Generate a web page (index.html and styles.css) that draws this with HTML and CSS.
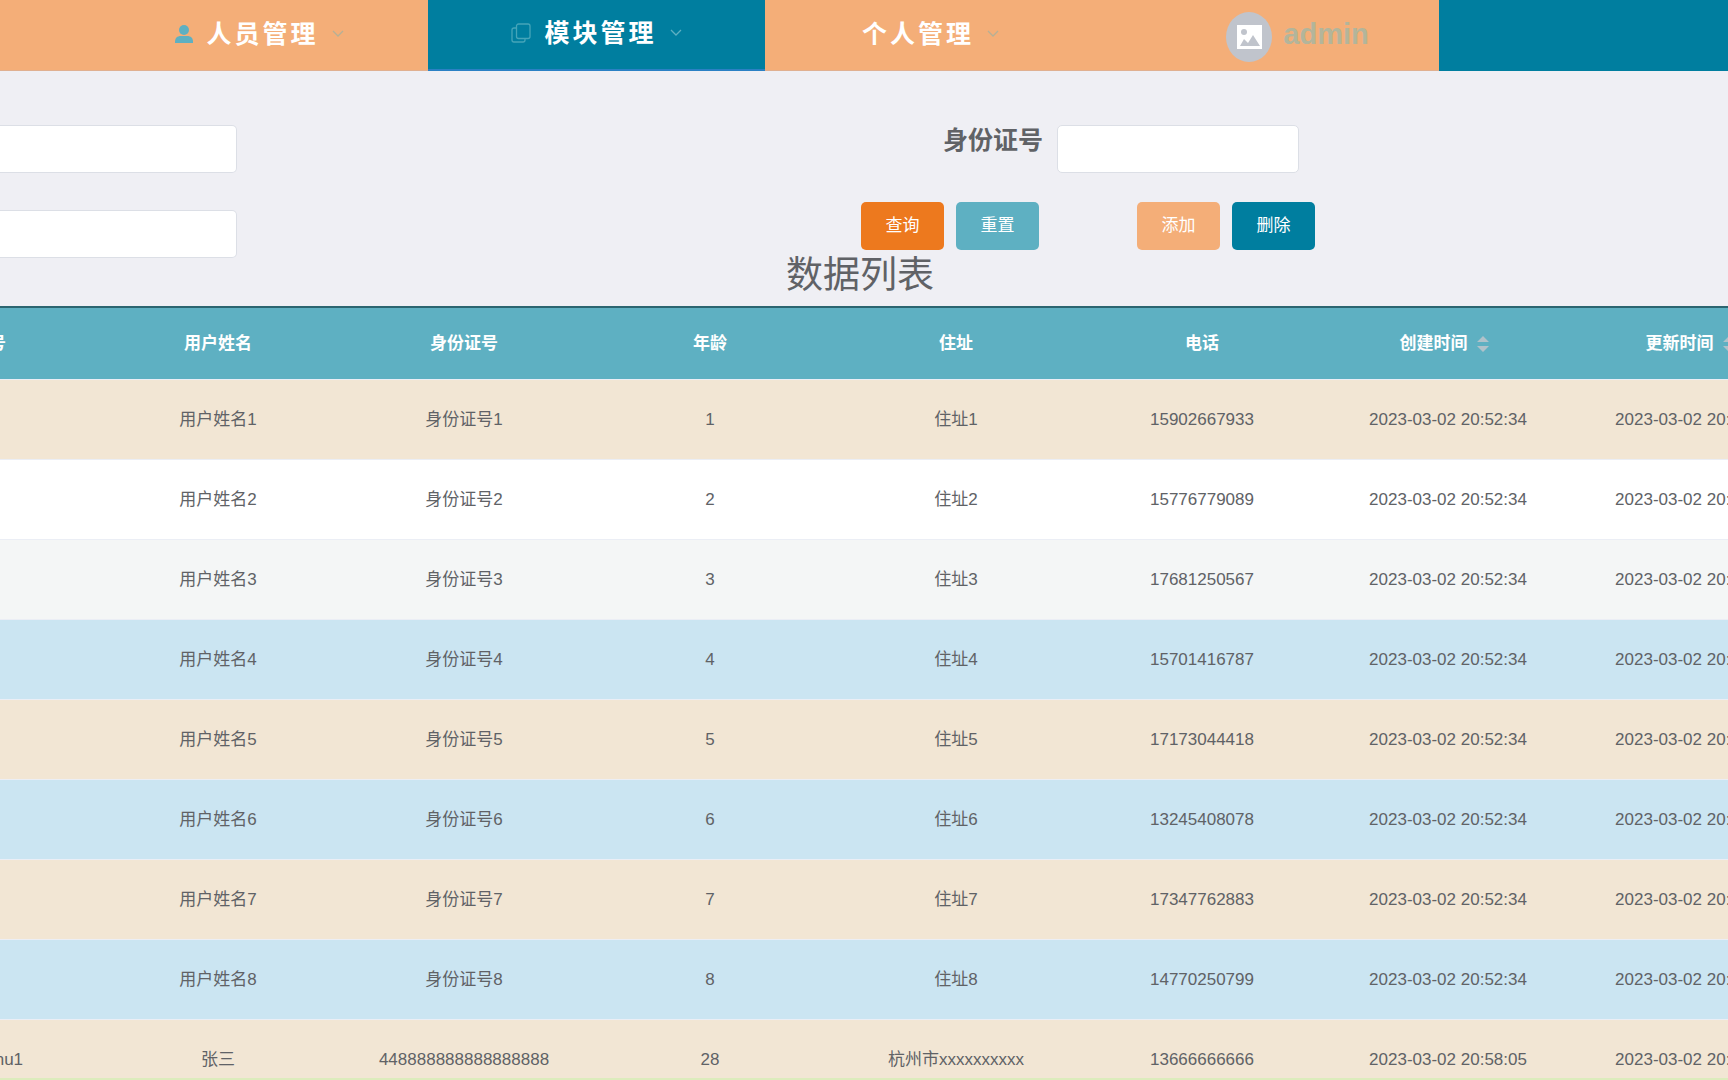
FILE: index.html
```html
<!DOCTYPE html>
<html lang="zh-CN">
<head>
<meta charset="utf-8">
<title>数据列表</title>
<link rel="stylesheet" href="styles.css">
</head>
<body>
<header class="topbar">
  <nav class="menu">
    <a class="item people" href="#">
      <svg class="icon" width="18" height="20" viewBox="0 0 18 20"><circle cx="9" cy="6" r="5" fill="currentColor"/><path d="M0 19v-1c0-4 2-6 6-6h6c4 0 6 2 6 6v1z" fill="currentColor"/></svg>
      <span>人员管理</span>
      <svg class="arrow" width="12" height="8" viewBox="0 0 12 8"><path d="M1 1l5 5 5-5"/></svg>
    </a>
    <a class="item active" href="#">
      <svg class="icon" width="20" height="20" viewBox="0 0 20 20" fill="none" stroke="currentColor" stroke-width="1.300"><rect x="5.500" y="1" width="13.500" height="14.500" rx="2"/><path d="M5.500 5H3a2 2 0 0 0-2 2v10a2 2 0 0 0 2 2h9a2 2 0 0 0 2-2v-1.500"/></svg>
      <span>模块管理</span>
      <svg class="arrow" width="12" height="8" viewBox="0 0 12 8"><path d="M1 1l5 5 5-5"/></svg>
    </a>
    <a class="item personal" href="#">
      <span>个人管理</span>
      <svg class="arrow" width="12" height="8" viewBox="0 0 12 8"><path d="M1 1l5 5 5-5"/></svg>
    </a>
    <a class="item user" href="#">
      <svg class="avatar" width="46" height="50" viewBox="0 0 46 50"><ellipse cx="23" cy="25" rx="23" ry="25" fill="#c0c4cc"/><path d="M11 13h25v24H11z" fill="#fff"/><circle cx="18" cy="20" r="3" fill="#c0c4cc"/><path d="M14 34l4-7 4 4 5-8 7 11z" fill="#c0c4cc"/></svg>
      <span>admin</span>
    </a>
  </nav>
</header>
<main>
  <form class="filters">
    <div class="left">
      <input type="text" aria-label="用户账号">
      <input type="text" aria-label="用户姓名">
    </div>
    <div class="right">
      <div class="field">
        <label for="idno">身份证号</label>
        <input id="idno" type="text">
      </div>
      <div class="actions">
        <button type="button" class="search">查询</button>
        <button type="button" class="reset">重置</button>
        <button type="button" class="add">添加</button>
        <button type="button" class="remove">删除</button>
      </div>
    </div>
  </form>
  <h1 class="title">数据列表</h1>
  <div class="list">
    <table>
      <thead>
        <tr><th>用户账号</th><th>用户姓名</th><th>身份证号</th><th>年龄</th><th>住址</th><th>电话</th>
        <th class="sortable">创建时间<svg class="sort" width="12" height="16" viewBox="0 0 12 16"><path d="M6 0l6 6H0zM6 16l6-6H0z"/></svg></th>
        <th class="sortable">更新时间<svg class="sort" width="12" height="16" viewBox="0 0 12 16"><path d="M6 0l6 6H0zM6 16l6-6H0z"/></svg></th></tr>
      </thead>
      <tbody>
        <tr class="sand"><td>账号1</td><td>用户姓名1</td><td>身份证号1</td><td>1</td><td>住址1</td><td>15902667933</td><td>2023-03-02 20:52:34</td><td>2023-03-02 20:52:34</td></tr>
        <tr class="plain"><td>账号2</td><td>用户姓名2</td><td>身份证号2</td><td>2</td><td>住址2</td><td>15776779089</td><td>2023-03-02 20:52:34</td><td>2023-03-02 20:52:34</td></tr>
        <tr class="hover"><td>账号3</td><td>用户姓名3</td><td>身份证号3</td><td>3</td><td>住址3</td><td>17681250567</td><td>2023-03-02 20:52:34</td><td>2023-03-02 20:52:34</td></tr>
        <tr class="sky"><td>账号4</td><td>用户姓名4</td><td>身份证号4</td><td>4</td><td>住址4</td><td>15701416787</td><td>2023-03-02 20:52:34</td><td>2023-03-02 20:52:34</td></tr>
        <tr class="sand"><td>账号5</td><td>用户姓名5</td><td>身份证号5</td><td>5</td><td>住址5</td><td>17173044418</td><td>2023-03-02 20:52:34</td><td>2023-03-02 20:52:34</td></tr>
        <tr class="sky"><td>账号6</td><td>用户姓名6</td><td>身份证号6</td><td>6</td><td>住址6</td><td>13245408078</td><td>2023-03-02 20:52:34</td><td>2023-03-02 20:52:34</td></tr>
        <tr class="sand"><td>账号7</td><td>用户姓名7</td><td>身份证号7</td><td>7</td><td>住址7</td><td>17347762883</td><td>2023-03-02 20:52:34</td><td>2023-03-02 20:52:34</td></tr>
        <tr class="sky"><td>账号8</td><td>用户姓名8</td><td>身份证号8</td><td>8</td><td>住址8</td><td>14770250799</td><td>2023-03-02 20:52:34</td><td>2023-03-02 20:52:34</td></tr>
        <tr class="sand"><td>yonghuzhhu1</td><td>张三</td><td>448888888888888888</td><td>28</td><td>杭州市xxxxxxxxxx</td><td>13666666666</td><td>2023-03-02 20:58:05</td><td>2023-03-02 20:58:05</td></tr>
      </tbody>
    </table>
  </div>
</main>
<div class="edge"></div>
</body>
</html>
```
FILE: styles.css
```css
* { box-sizing: border-box; }
body {
  margin: 0;
  height: 100vh;
  overflow: hidden;
  background: #efeff4;
  color: #606266;
  font: 17px/24px "Liberation Sans", "Noto Sans CJK SC", sans-serif;
}
.topbar { background: #007e9f; }
.menu {
  display: grid;
  grid-template-columns: 91fr repeat(4, 337fr) 289fr;
  height: 71px;
}
.item {
  display: flex;
  align-items: center;
  justify-content: center;
  gap: 13px;
  padding-bottom: 3px;
  background: #f4ae78;
  border-bottom: 1px solid #e0b090;
  color: #fff;
  font-size: 25px;
  font-weight: 700;
  letter-spacing: 3px;
  text-decoration: none;
}
.people { grid-column: 1 / 3; padding-left: 91px; }
.personal { padding-right: 6px; }
.item.active { background: #007e9f; border-bottom: 2px solid #2a80c4; }
.icon { color: #5eb0c2; }
.active .icon { color: #45a5b9; }
.arrow { fill: none; stroke: #b5b096; stroke-width: 1.3; }
.active .arrow { stroke: #5eb0c2; }
.user { gap: 11px; padding-top: 4px; padding-left: 54px; padding-bottom: 0; color: #b3b59b; font-size: 29px; letter-spacing: normal; }
.user span { padding-bottom: 6px; }

.filters {
  display: grid;
  grid-template-columns: 861fr 867fr;
  padding-top: 54px;
}
input {
  height: 48px;
  padding: 0 15px;
  background: #fff;
  border: 1px solid #dcdfe6;
  border-radius: 5px;
  font: inherit;
}
.left { display: flex; flex-direction: column; gap: 37px; margin-bottom: -8px; }
.left input { width: 237px; border-left: 0; border-radius: 0 5px 5px 0; }
.field { display: flex; gap: 14px; padding-left: 82px; }
.field label { font-size: 25px; line-height: 30px; font-weight: 700; }
.field input { width: 242px; }
.actions { display: flex; gap: 12px; margin-top: 29px; }
button {
  width: 83px;
  height: 48px;
  padding: 0;
  border: 0;
  border-radius: 5px;
  color: #fff;
  font: inherit;
}
.search { background: #ed791e; }
.reset { background: #5eb0c2; }
.add { margin-left: 86px; background: #f4ae78; }
.remove { background: #007e9f; }

.title {
  height: 56px;
  margin: 0;
  padding-right: 8px;
  font-size: 37px;
  line-height: 52px;
  font-weight: 400;
  text-align: center;
}
.list { overflow: hidden; border-top: 2px solid #2c6570; }
table {
  width: calc(100% + 240px);
  margin-left: -151px;
  table-layout: fixed;
  border-collapse: separate;
  border-spacing: 0;
  text-align: center;
}
th, td { padding: 0; border-bottom: 1px solid #ebeef5; white-space: nowrap; }
th { height: 72px; background: #5eb0c2; color: #fff; }
td { height: 80px; }
.sortable { padding-right: 8px; }
.sort { margin-left: 9px; vertical-align: -3px; fill: #b0c2ca; }
.sand { background: #f2e6d4; }
.plain { background: #fff; }
.hover { background: #f4f6f6; }
.sky { background: #cbe5f2; }
.edge { position: fixed; right: 0; bottom: 0; left: 0; height: 2px; background: #dcecbc; }
```
